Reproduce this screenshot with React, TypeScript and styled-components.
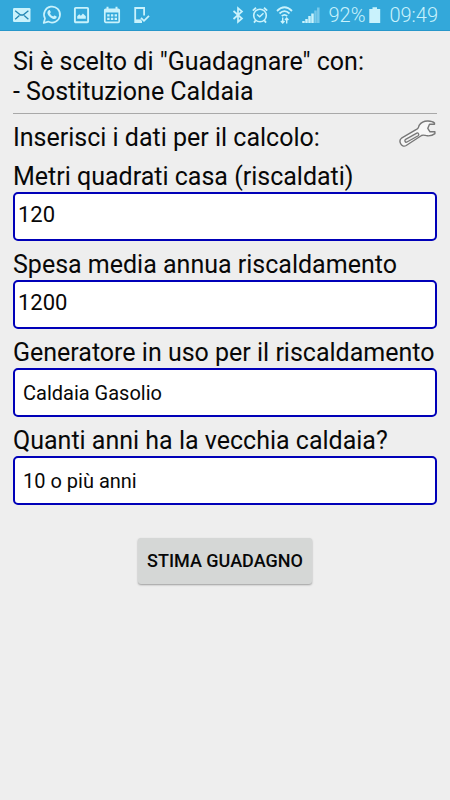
import React from 'react';
import styled, { createGlobalStyle } from 'styled-components';

const GlobalStyle = createGlobalStyle`
  *, *::before, *::after { box-sizing: border-box; }
  body {
    margin: 0;
    background: #eeeeee;
    color: #080808;
    font-family: Roboto, "Liberation Sans", sans-serif;
  }
`;

const Screen = styled.div`
  min-height: 100vh;
  background: #eeeeee;
`;

const StatusBar = styled.header`
  display: flex;
  align-items: center;
  justify-content: space-between;
  height: 31px;
  padding: 0 12px;
  background: #33a8da;
  color: #c9f2fc;
  border-bottom: 1px solid #2797ca;
`;

const Notifications = styled.div`
  display: flex;
  align-items: center;
  gap: 10px;
`;

const Indicators = styled.div`
  display: flex;
  align-items: center;
  gap: 8px;
`;

const Battery = styled.span`
  display: flex;
  align-items: center;
  gap: 4px;
`;

const StatusText = styled.span`
  font-size: 20px;
  line-height: 30px;
  font-weight: 300;
`;

const Icon = styled.svg`
  display: block;
  flex: none;
  fill: none;
  stroke: currentColor;
`;

const Main = styled.main`
  padding: 16px 13px 24px;
`;

const Heading = styled.h1`
  margin: 0;
  padding-bottom: 6px;
  border-bottom: 1px solid #a8a8a8;
  font-size: 25px;
  line-height: 30px;
  font-weight: 400;
`;

const FormHeader = styled.div`
  display: flex;
  align-items: center;
  justify-content: space-between;
  height: 47px;
`;

const Prompt = styled.h2`
  margin: 0;
  font-size: 25px;
  line-height: 30px;
  font-weight: 400;
`;

const ToolButton = styled.button`
  display: block;
  padding: 0;
  border: 0;
  background: none;
  color: #777777;
  margin-bottom: 8px;
`;

const Form = styled.form`
  display: flex;
  flex-direction: column;
  gap: 8px;
`;

const Field = styled.div`
  display: flex;
  flex-direction: column;
`;

const Label = styled.label`
  font-size: 25px;
  line-height: 31px;
  white-space: nowrap;
`;

const TextInput = styled.input`
  width: 100%;
  height: 49px;
  padding: 0 3px 4px;
  border: 2px solid #0000b8;
  border-radius: 5px;
  background: #ffffff;
  color: inherit;
  font: 400 22px/28px Roboto, "Liberation Sans", sans-serif;
  outline: 0;
`;

const Select = styled.select`
  appearance: none;
  width: 100%;
  height: 49px;
  padding: 0 8px;
  border: 2px solid #0000b8;
  border-radius: 5px;
  background: #ffffff;
  color: inherit;
  font: 400 20px/28px Roboto, "Liberation Sans", sans-serif;
  outline: 0;
`;

const SubmitButton = styled.button`
  align-self: center;
  height: 46px;
  margin-top: 25px;
  padding: 0 9px;
  border: 0;
  border-radius: 3px;
  background: #d5d7d6;
  box-shadow: 0 1px 2px rgba(0, 0, 0, 0.35);
  color: inherit;
  font: 500 18px/24px Roboto, "Liberation Sans", sans-serif;
`;

const MailIcon = () => (
  <Icon width="20" height="20" viewBox="0 0 20 20" aria-label="Mail">
    <rect x="1" y="3" width="17.5" height="14" rx="1.2" fill="currentColor" stroke="none" />
    <path d="M3.2 5.8 8.5 10h2.600L16.400 5.800M3.200 14.200 7.400 10.400M16.400 14.200 12.200 10.400" stroke="#2487b4" strokeWidth="1.300" />
  </Icon>
);

const WhatsAppIcon = () => (
  <Icon width="20" height="20" viewBox="0 0 20 20" aria-label="WhatsApp">
    <path d="M1.7 18 3 13.4A8 8 0 1 1 6.2 16.6Z" strokeWidth="1.7" strokeLinejoin="round" />
    <path d="M6.8 5.3c.4-.3 1-.3 1.2.1l.8 1.7c.1.4-.5.9-.8 1.3.7 1.5 1.8 2.5 3.4 3.2.5-.5.9-1.2 1.3-1l1.8.9c.4.2.1 1.2-.3 1.7-.8.9-2.3 1-4 .2-2.3-1-4.1-3-4.7-4.9-.4-1.400.4-2.500 1.300-3.200Z" fill="currentColor" stroke="none" />
  </Icon>
);

const PictureIcon = () => (
  <Icon width="20" height="20" viewBox="0 0 20 20" aria-label="Picture">
    <rect x="2.9" y="2.900" width="13.200" height="14.400" rx="0.800" strokeWidth="1.900" />
    <path d="M5.200 13.700v-2.500l2-2 1.700 1.500 2-2.100 2.900 2.600v2.500Z" fill="currentColor" stroke="none" />
  </Icon>
);

const CalendarIcon = () => (
  <Icon width="20" height="20" viewBox="0 0 20 20" aria-label="Calendar">
    <path d="M5.500 1.800v4M14.500 1.800v4" strokeWidth="2" />
    <rect x="2.800" y="4.300" width="14.400" height="13" rx="1" strokeWidth="1.700" />
    <path d="M2.500 6h15" strokeWidth="3" />
    <path d="M5.200 10.300h10M5.200 13.900h10" strokeWidth="2.200" strokeDasharray="2.400 1.300" />
  </Icon>
);

const DeviceCheckIcon = () => (
  <Icon width="20" height="20" viewBox="0 0 20 20" aria-label="Device ready">
    <path d="M12.100 10.500V3H3.200v14H10" strokeWidth="1.800" />
    <path d="M3 15.700h6.500" strokeWidth="2.600" />
    <path d="m9 12.800 3 3 5-5" strokeWidth="1.800" />
  </Icon>
);

const BluetoothIcon = () => (
  <Icon width="12" height="18" viewBox="0 0 12 18" aria-label="Bluetooth">
    <path d="m1.500 5 8.500 7.500-4 3.500V2l4 3.500L1.500 13" strokeWidth="1.700" />
  </Icon>
);

const AlarmIcon = () => (
  <Icon width="16" height="18" viewBox="0 0 16 18" aria-label="Alarm">
    <circle cx="8" cy="9.500" r="6.300" strokeWidth="1.600" />
    <path d="M.800 4.600 4 1.800M15.200 4.600 12 1.800M3.800 14.300 2 16.600M12.200 14.300l1.800 2.300" strokeWidth="1.800" />
    <path d="m5 8.500 2.700 2.300 3.800-3.600" strokeWidth="1.500" />
  </Icon>
);

const WifiIcon = () => (
  <Icon width="18" height="20" viewBox="0 0 18 20" aria-label="Wi-Fi">
    <path d="M1 6Q8.500-1.500 16 6M3.500 8.500Q8.500 3.700 13.500 8.500M5.800 11.200Q8.500 8.500 11.200 11.200" strokeWidth="1.800" />
    <path d="M6.700 12.500V18M4.900 16l1.800 2 1.800-2M10.700 18.500V13M9 15l1.700-2 1.700 2" strokeWidth="1.400" />
  </Icon>
);

const SignalIcon = () => (
  <Icon width="18" height="18" viewBox="0 0 18 18" aria-label="Signal">
    <path d="M1.500 17v-2M4.500 17v-4M7.500 17v-7M10.500 17V7.500" strokeWidth="2.500" />
    <path d="M13.500 17V4.500M16.300 17V1.500" strokeWidth="2.500" opacity="0.450" />
  </Icon>
);

const BatteryIcon = () => (
  <Icon width="12" height="18" viewBox="0 0 12 18" aria-label="Battery">
    <path d="M.300 3H3.500V1.200h4.500V3h3.200v14H.300Z" fill="currentColor" stroke="none" />
  </Icon>
);

const WrenchIcon = () => (
  <Icon width="38" height="28" viewBox="0 0 38 28" aria-hidden="true">
    <path
      d="M2.500 18.200 18.300 8.900C19.700 8 19.400 6.800 20.300 5.200 22.200 2.200 25.500.900 29 1c2.900.100 5.300.800 6.500 2v1.300h-5L28.800 8.300l2.200 3.500h4.900v1.800c-2 1.700-4.800 2.400-7.600 2.200-2.100-.100-3.800-1.300-5.800-.300L7.200 25.500c-2.500 1.400-4.600.200-5.500-1.700-1-2-.900-4.400.800-5.600Z"
      fill="#f7f7f7"
      strokeWidth="1.400"
      strokeLinejoin="round"
    />
    <path d="m6.600 19.400 11.200-6.300c1.300-.700 2.900 1.600 1.400 2.600L8 22c-1.800.900-3-1.600-1.400-2.600Z" fill="#eeeeee" strokeWidth="1.300" />
  </Icon>
);

export default function App() {
  return (
    <Screen>
      <GlobalStyle />
      <StatusBar>
        <Notifications>
          <MailIcon />
          <WhatsAppIcon />
          <PictureIcon />
          <CalendarIcon />
          <DeviceCheckIcon />
        </Notifications>
        <Indicators>
          <BluetoothIcon />
          <AlarmIcon />
          <WifiIcon />
          <SignalIcon />
          <Battery>
            <StatusText>92%</StatusText>
            <BatteryIcon />
          </Battery>
          <StatusText>09:49</StatusText>
        </Indicators>
      </StatusBar>
      <Main>
        <Heading>
          Si è scelto di "Guadagnare" con:
          <br />- Sostituzione Caldaia
        </Heading>
        <FormHeader>
          <Prompt>Inserisci i dati per il calcolo:</Prompt>
          <ToolButton type="button" aria-label="Impostazioni">
            <WrenchIcon />
          </ToolButton>
        </FormHeader>
        <Form onSubmit={(event) => event.preventDefault()}>
          <Field>
            <Label htmlFor="area">Metri quadrati casa (riscaldati)</Label>
            <TextInput id="area" inputMode="numeric" defaultValue="120" />
          </Field>
          <Field>
            <Label htmlFor="expense">Spesa media annua riscaldamento</Label>
            <TextInput id="expense" inputMode="numeric" defaultValue="1200" />
          </Field>
          <Field>
            <Label htmlFor="generator">Generatore in uso per il riscaldamento</Label>
            <Select id="generator">
              <option>Caldaia Gasolio</option>
            </Select>
          </Field>
          <Field>
            <Label htmlFor="age">Quanti anni ha la vecchia caldaia?</Label>
            <Select id="age">
              <option>10 o più anni</option>
            </Select>
          </Field>
          <SubmitButton type="submit">STIMA GUADAGNO</SubmitButton>
        </Form>
      </Main>
    </Screen>
  );
}
